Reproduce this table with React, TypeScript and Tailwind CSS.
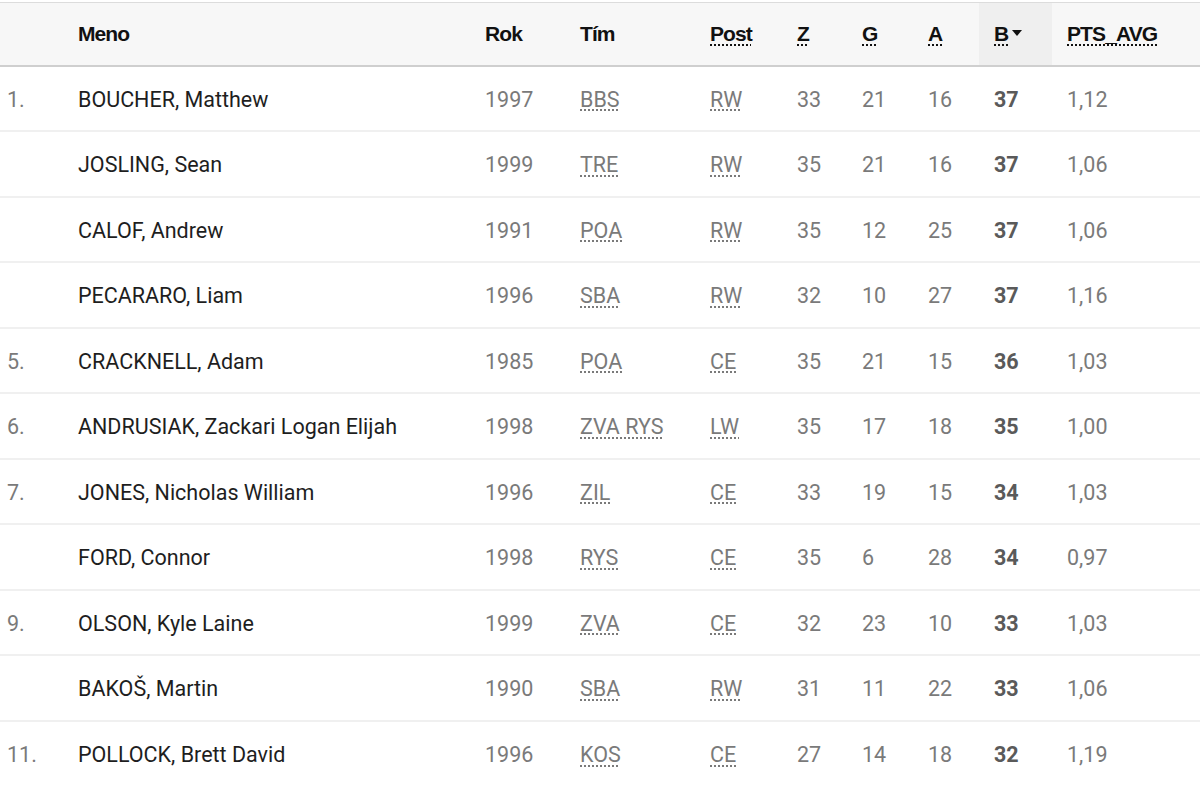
import React from 'react';

interface Player {
    rank: string;
    name: string;
    year: number;
    team: string;
    pos: string;
    gp: number;
    g: number;
    a: number;
    pts: number;
    avg: string;
}

const players: Player[] = [
    { rank: '1.', name: 'BOUCHER, Matthew', year: 1997, team: 'BBS', pos: 'RW', gp: 33, g: 21, a: 16, pts: 37, avg: '1,12' },
    { rank: '', name: 'JOSLING, Sean', year: 1999, team: 'TRE', pos: 'RW', gp: 35, g: 21, a: 16, pts: 37, avg: '1,06' },
    { rank: '', name: 'CALOF, Andrew', year: 1991, team: 'POA', pos: 'RW', gp: 35, g: 12, a: 25, pts: 37, avg: '1,06' },
    { rank: '', name: 'PECARARO, Liam', year: 1996, team: 'SBA', pos: 'RW', gp: 32, g: 10, a: 27, pts: 37, avg: '1,16' },
    { rank: '5.', name: 'CRACKNELL, Adam', year: 1985, team: 'POA', pos: 'CE', gp: 35, g: 21, a: 15, pts: 36, avg: '1,03' },
    { rank: '6.', name: 'ANDRUSIAK, Zackari Logan Elijah', year: 1998, team: 'ZVA RYS', pos: 'LW', gp: 35, g: 17, a: 18, pts: 35, avg: '1,00' },
    { rank: '7.', name: 'JONES, Nicholas William', year: 1996, team: 'ZIL', pos: 'CE', gp: 33, g: 19, a: 15, pts: 34, avg: '1,03' },
    { rank: '', name: 'FORD, Connor', year: 1998, team: 'RYS', pos: 'CE', gp: 35, g: 6, a: 28, pts: 34, avg: '0,97' },
    { rank: '9.', name: 'OLSON, Kyle Laine', year: 1999, team: 'ZVA', pos: 'CE', gp: 32, g: 23, a: 10, pts: 33, avg: '1,03' },
    { rank: '', name: 'BAKOŠ, Martin', year: 1990, team: 'SBA', pos: 'RW', gp: 31, g: 11, a: 22, pts: 33, avg: '1,06' },
    { rank: '11.', name: 'POLLOCK, Brett David', year: 1996, team: 'KOS', pos: 'CE', gp: 27, g: 14, a: 18, pts: 32, avg: '1,19' },
];

const dotted = 'underline decoration-dotted decoration-2 underline-offset-[3px]';

function Th({ children, abbr, sorted }: { children: React.ReactNode; abbr?: boolean; sorted?: boolean }) {
    return (
        <th className={`text-left font-bold px-[15px] tracking-[-0.9px] ${sorted ? 'bg-[#efefef]' : ''}`}>
            <span className={abbr ? dotted : ''}>{children}</span>
            {sorted && <span className="inline-block align-middle ml-[4px] mb-[4px] border-x-[5px] border-x-transparent border-t-[6px] border-t-[#111]" />}
        </th>
    );
}

export default function App() {
    return (
        <div className="w-[1200px] h-[788px] overflow-hidden bg-white pt-[2px]">
            <table className="w-[1200px] table-fixed border-collapse">
                <colgroup>
                    <col className="w-[63px]" />
                    <col className="w-[407px]" />
                    <col className="w-[95px]" />
                    <col className="w-[130px]" />
                    <col className="w-[87px]" />
                    <col className="w-[65px]" />
                    <col className="w-[66px]" />
                    <col className="w-[66px]" />
                    <col className="w-[73px]" />
                    <col className="w-[148px]" />
                </colgroup>
                <thead>
                    <tr className="h-[63px] bg-[#f7f7f7] border-t border-t-[#dcdcdc] border-b-2 border-b-[#cfcfcf] text-[21px] text-[#111] font-['Liberation_Sans',Arial,sans-serif]">
                        <th className="px-[7px]" />
                        <Th>Meno</Th>
                        <Th>Rok</Th>
                        <Th>Tím</Th>
                        <Th abbr>Post</Th>
                        <Th abbr>Z</Th>
                        <Th abbr>G</Th>
                        <Th abbr>A</Th>
                        <Th abbr sorted>B</Th>
                        <Th abbr>PTS_AVG</Th>
                    </tr>
                </thead>
                <tbody className="font-['Roboto',sans-serif] text-[21.5px] text-[#7a7a7a]">
                    {players.map((p, i) => (
                        <tr key={i} className={`h-[65.5px] ${i > 0 ? 'border-t-2 border-t-[#f0f0f0]' : ''}`}>
                            <td className="px-[7px] pt-[3px]">{p.rank}</td>
                            <td className="px-[15px] pt-[3px] text-[#1e1e1e]">{p.name}</td>
                            <td className="px-[15px] pt-[3px]">{p.year}</td>
                            <td className="px-[15px] pt-[3px]"><span className={dotted}>{p.team}</span></td>
                            <td className="px-[15px] pt-[3px]"><span className={dotted}>{p.pos}</span></td>
                            <td className="px-[15px] pt-[3px]">{p.gp}</td>
                            <td className="px-[15px] pt-[3px]">{p.g}</td>
                            <td className="px-[15px] pt-[3px]">{p.a}</td>
                            <td className="px-[15px] pt-[3px] font-bold text-[#5a5a5a]">{p.pts}</td>
                            <td className="px-[15px] pt-[3px]">{p.avg}</td>
                        </tr>
                    ))}
                </tbody>
            </table>
        </div>
    );
}
